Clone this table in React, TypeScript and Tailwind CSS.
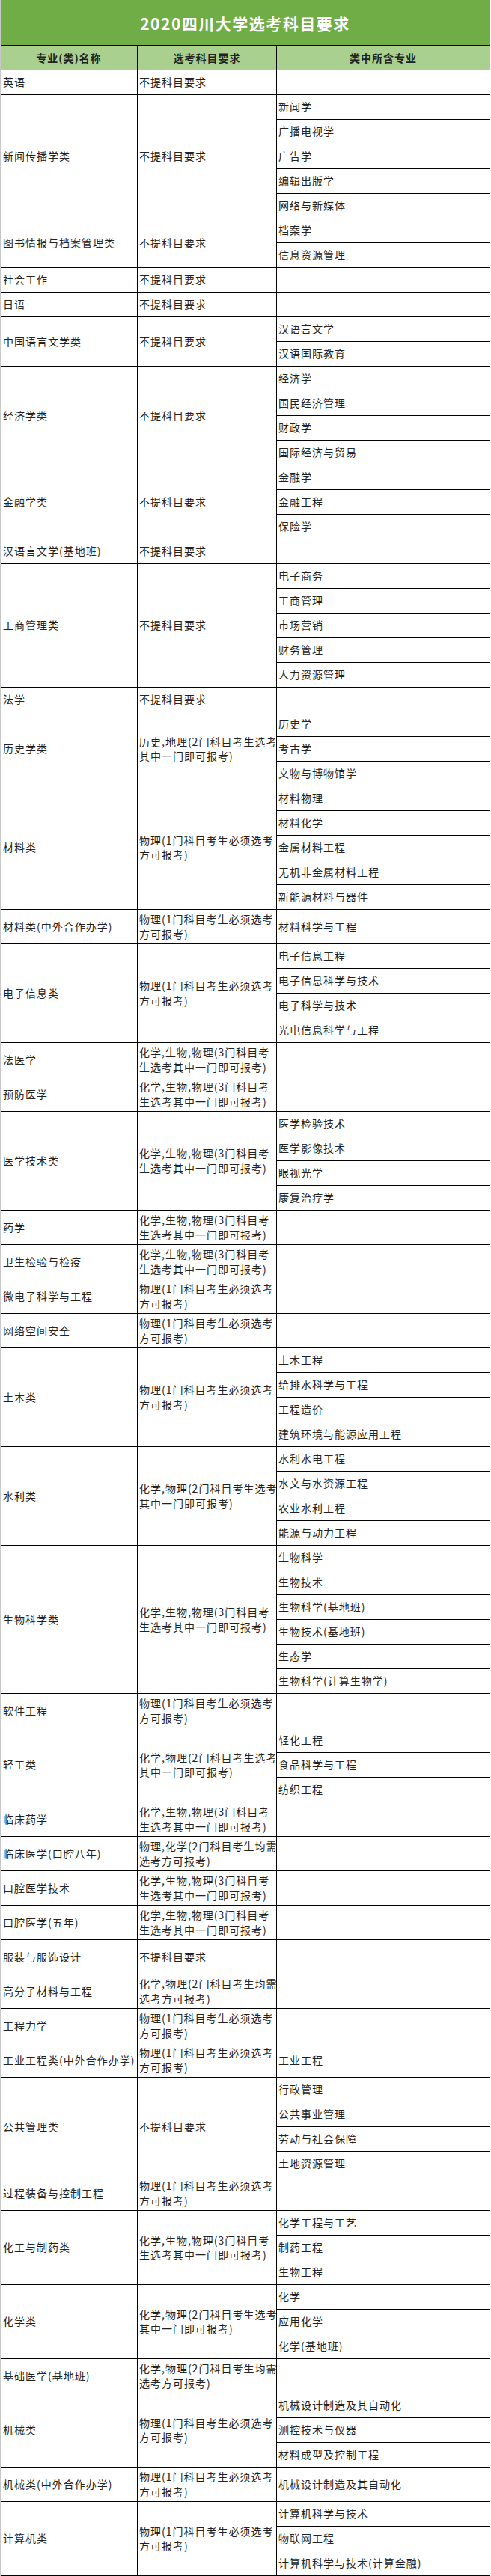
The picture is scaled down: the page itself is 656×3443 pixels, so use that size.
import React from "react";

type Row = {
  name: string;
  req: string;
  subs?: string[];
  h?: number;
};

const NONE = "不提科目要求";
const PHY = "物理(1门科目考生必须选考\n方可报考)";
const CBP = "化学,生物,物理(3门科目考\n生选考其中一门即可报考)";
const CP = "化学,物理(2门科目考生选考\n其中一门即可报考)";
const HG = "历史,地理(2门科目考生选考\n其中一门即可报考)";
const PC_ALL = "物理,化学(2门科目考生均需\n选考方可报考)";
const CP_ALL = "化学,物理(2门科目考生均需\n选考方可报考)";

const rows: Row[] = [
  { name: "英语", req: NONE },
  { name: "新闻传播学类", req: NONE, subs: ["新闻学", "广播电视学", "广告学", "编辑出版学", "网络与新媒体"] },
  { name: "图书情报与档案管理类", req: NONE, subs: ["档案学", "信息资源管理"] },
  { name: "社会工作", req: NONE },
  { name: "日语", req: NONE },
  { name: "中国语言文学类", req: NONE, subs: ["汉语言文学", "汉语国际教育"] },
  { name: "经济学类", req: NONE, subs: ["经济学", "国民经济管理", "财政学", "国际经济与贸易"] },
  { name: "金融学类", req: NONE, subs: ["金融学", "金融工程", "保险学"] },
  { name: "汉语言文学(基地班)", req: NONE },
  { name: "工商管理类", req: NONE, subs: ["电子商务", "工商管理", "市场营销", "财务管理", "人力资源管理"] },
  { name: "法学", req: NONE },
  { name: "历史学类", req: HG, subs: ["历史学", "考古学", "文物与博物馆学"] },
  { name: "材料类", req: PHY, subs: ["材料物理", "材料化学", "金属材料工程", "无机非金属材料工程", "新能源材料与器件"] },
  { name: "材料类(中外合作办学)", req: PHY, subs: ["材料科学与工程"] },
  { name: "电子信息类", req: PHY, subs: ["电子信息工程", "电子信息科学与技术", "电子科学与技术", "光电信息科学与工程"] },
  { name: "法医学", req: CBP },
  { name: "预防医学", req: CBP },
  { name: "医学技术类", req: CBP, subs: ["医学检验技术", "医学影像技术", "眼视光学", "康复治疗学"] },
  { name: "药学", req: CBP },
  { name: "卫生检验与检疫", req: CBP },
  { name: "微电子科学与工程", req: PHY },
  { name: "网络空间安全", req: PHY },
  { name: "土木类", req: PHY, subs: ["土木工程", "给排水科学与工程", "工程造价", "建筑环境与能源应用工程"] },
  { name: "水利类", req: CP, subs: ["水利水电工程", "水文与水资源工程", "农业水利工程", "能源与动力工程"] },
  {
    name: "生物科学类",
    req: CBP,
    subs: ["生物科学", "生物技术", "生物科学(基地班)", "生物技术(基地班)", "生态学", "生物科学(计算生物学)"],
  },
  { name: "软件工程", req: PHY },
  { name: "轻工类", req: CP, subs: ["轻化工程", "食品科学与工程", "纺织工程"] },
  { name: "临床药学", req: CBP },
  { name: "临床医学(口腔八年)", req: PC_ALL },
  { name: "口腔医学技术", req: CBP },
  { name: "口腔医学(五年)", req: CBP },
  { name: "服装与服饰设计", req: NONE, h: 46 },
  { name: "高分子材料与工程", req: CP_ALL },
  { name: "工程力学", req: PHY },
  { name: "工业工程类(中外合作办学)", req: PHY, subs: ["工业工程"] },
  { name: "公共管理类", req: NONE, subs: ["行政管理", "公共事业管理", "劳动与社会保障", "土地资源管理"] },
  { name: "过程装备与控制工程", req: PHY },
  { name: "化工与制药类", req: CBP, subs: ["化学工程与工艺", "制药工程", "生物工程"] },
  { name: "化学类", req: CP, subs: ["化学", "应用化学", "化学(基地班)"] },
  { name: "基础医学(基地班)", req: CP_ALL },
  { name: "机械类", req: PHY, subs: ["机械设计制造及其自动化", "测控技术与仪器", "材料成型及控制工程"] },
  { name: "机械类(中外合作办学)", req: PHY, subs: ["机械设计制造及其自动化"] },
  { name: "计算机类", req: PHY, subs: ["计算机科学与技术", "物联网工程", "计算机科学与技术(计算金融)"] },
];

const font = "font-['Noto_Sans_CJK_SC','Noto_Sans',sans-serif]";
const cellText = "text-[14px] tracking-[1px] leading-[19.5px] text-[#222] whitespace-pre";

function TableRow({ row }: { row: Row }) {
  const subs = row.subs ?? [];
  const single = subs.length <= 1;
  const tall = row.h === 46 || row.req.includes("\n");
  const subH = single && tall ? "h-[46px]" : "h-[33px]";

  return (
    <div className="flex">
      <div className={`w-[183px] shrink-0 flex items-center border-r border-b border-black pl-[3px] ${cellText}`}>
        {row.name}
      </div>
      <div className={`w-[186px] shrink-0 flex items-center border-r border-b border-black pl-[2px] ${cellText}`}>
        {row.req}
      </div>
      <div className="flex-1 flex flex-col">
        {subs.length === 0 ? (
          <div className={`${subH} border-b border-black`} />
        ) : (
          subs.map((s) => (
            <div key={s} className={`${subH} flex items-center border-b border-black pl-[2px] ${cellText}`}>
              {s}
            </div>
          ))
        )}
      </div>
    </div>
  );
}

export default function App() {
  return (
    <div className={`w-[656px] bg-white ${font}`}>
      <div className="w-[655px] border-l border-l-[#c8c8c8] border-r border-r-black">
        {/* title */}
        <div className="h-[60px] bg-[#70ad47] flex items-center justify-center text-white font-bold text-[21px] tracking-[1.5px] pt-[4px]">
          2020四川大学选考科目要求
        </div>

        {/* column headings */}
        <div className="flex h-[34px] bg-[#a9d08e] border-y border-black text-[14px] tracking-[1px] font-bold text-[#222]">
          <div className="w-[183px] shrink-0 flex items-center justify-center border-r border-black">专业(类)名称</div>
          <div className="w-[186px] shrink-0 flex items-center justify-center border-r border-black">选考科目要求</div>
          <div className="flex-1 flex items-center justify-center">类中所含专业</div>
        </div>

        {rows.map((r) => (
          <TableRow key={r.name} row={r} />
        ))}
      </div>
    </div>
  );
}
